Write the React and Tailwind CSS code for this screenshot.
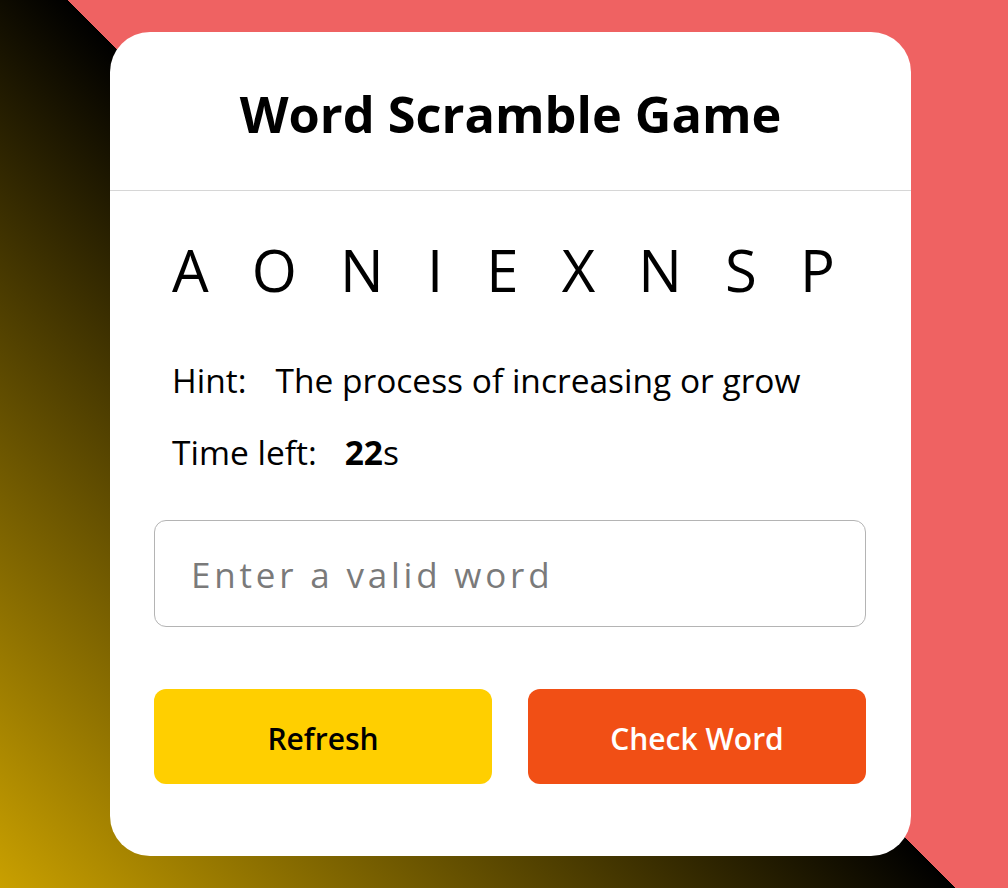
import { useState } from 'react'

const letters = ['A', 'O', 'N', 'I', 'E', 'X', 'N', 'S', 'P']

export default function App() {
  const [word, setWord] = useState('')

  return (
    <div
      className="h-screen w-full flex items-center justify-center bg-[linear-gradient(45deg,#c9a000_0%,#000_50.4%,#ef6262_50.4%)]"
      style={{ fontFamily: '"Open Sans", "Noto Sans", sans-serif' }}
    >
      <div className="ml-[13px] w-[801px] h-[824px] bg-white rounded-[40px] overflow-hidden">
        {/* Header */}
        <div className="h-[159px] pt-[6px] flex items-center justify-center border-b border-[#d6d6d6]">
          <h2 className="text-[50.5px] font-bold text-black leading-none">Word Scramble Game</h2>
        </div>

        <div className="pl-[44px] pr-[45px]">
          {/* Scrambled letters */}
          <div className="mt-[50px] pl-[18px] flex justify-between pr-[31px] text-[58px] leading-none text-black">
            {letters.map((l, i) => (
              <span key={i}>{l}</span>
            ))}
          </div>

          {/* Details */}
          <div className="mt-[65px] pl-[18px] text-[33.5px] text-black leading-none">
            <p className="whitespace-nowrap">
              Hint:<span className="ml-[29px]">The process of increasing or grow</span>
            </p>
            <p className="mt-[38.5px]">
              Time left:<span className="ml-[28px] font-bold">22</span>s
            </p>
          </div>

          {/* Input */}
          <input
            type="text"
            value={word}
            onChange={(e) => setWord(e.target.value)}
            placeholder="Enter a valid word"
            className="mt-[50px] w-full h-[107px] px-[36px] pt-[2px] border border-[#b4b4b4] rounded-[12px] text-[35px] tracking-[3.8px] outline-none placeholder:text-[#7a7a7a]"
          />

          {/* Buttons */}
          <div className="mt-[62px] flex gap-[36px]">
            <button className="flex-1 h-[95px] pt-[4px] rounded-[12px] bg-[#ffcf00] text-black text-[30px] font-semibold">
              Refresh
            </button>
            <button className="flex-1 h-[95px] pt-[4px] rounded-[12px] bg-[#f14f15] text-white text-[30px] font-semibold">
              Check Word
            </button>
          </div>
        </div>
      </div>
    </div>
  )
}
